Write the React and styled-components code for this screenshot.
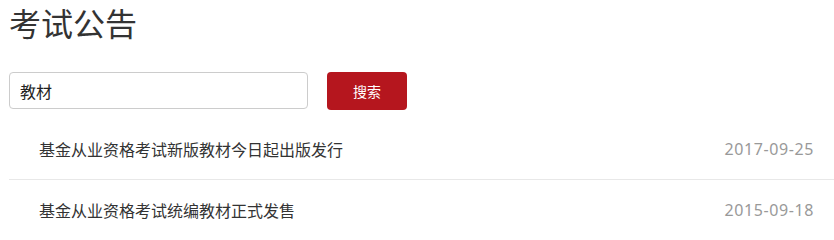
import React from "react";
import styled, { createGlobalStyle } from "styled-components";

const Global = createGlobalStyle`
  html, body { margin: 0; padding: 0; background: #fff; }
  body { font-family: "Noto Sans", "Noto Sans CJK SC", sans-serif; color: #333; }
  * { box-sizing: border-box; }
`;

const Page = styled.div`
  padding: 0 0 0 9px;
  width: 834px;
  overflow: hidden;
`;

const Title = styled.h1`
  margin: 0;
  padding-top: 4px;
  height: 72px;
  font-size: 32px;
  line-height: 40px;
  font-weight: 400;
  color: #333;
`;

const SearchBar = styled.form`
  display: flex;
  align-items: flex-start;
  gap: 19px;
  height: 48px;
`;

const SearchInput = styled.input`
  width: 299px;
  height: 37px;
  border: 1px solid #ccc;
  border-radius: 4px;
  padding: 0 10px;
  font-family: "Noto Sans", "Noto Sans CJK SC", sans-serif;
  font-size: 16px;
  color: #222;
  outline: none;
`;

const SearchButton = styled.button`
  width: 80px;
  height: 38px;
  border: none;
  border-radius: 4px;
  background: #b5161e;
  color: #fff;
  font-family: "Noto Sans CJK SC", sans-serif;
  font-size: 14px;
  cursor: pointer;
`;

const List = styled.ul`
  list-style: none;
  margin: 0;
  padding: 0;
`;

const Item = styled.li`
  display: flex;
  align-items: center;
  justify-content: space-between;
  height: 60px;
  padding: 0 20px 1px 30px;
  border-bottom: ${(p) => (p.$last ? "none" : "1px solid #e8e8e8")};
  font-size: 16px;
`;

const ItemTitle = styled.a`
  color: #333;
  text-decoration: none;
`;

const ItemDate = styled.span`
  color: #999;
  letter-spacing: 0.6px;
`;

const items = [
  { title: "基金从业资格考试新版教材今日起出版发行", date: "2017-09-25" },
  { title: "基金从业资格考试统编教材正式发售", date: "2015-09-18" },
];

export default function App() {
  return (
    <>
      <Global />
      <Page>
        <Title>考试公告</Title>
        <SearchBar onSubmit={(e) => e.preventDefault()}>
          <SearchInput defaultValue="教材" />
          <SearchButton type="submit">搜索</SearchButton>
        </SearchBar>
        <List>
          {items.map((it, i) => (
            <Item key={i} $last={i === items.length - 1}>
              <ItemTitle href="#">{it.title}</ItemTitle>
              <ItemDate>{it.date}</ItemDate>
            </Item>
          ))}
        </List>
      </Page>
    </>
  );
}
